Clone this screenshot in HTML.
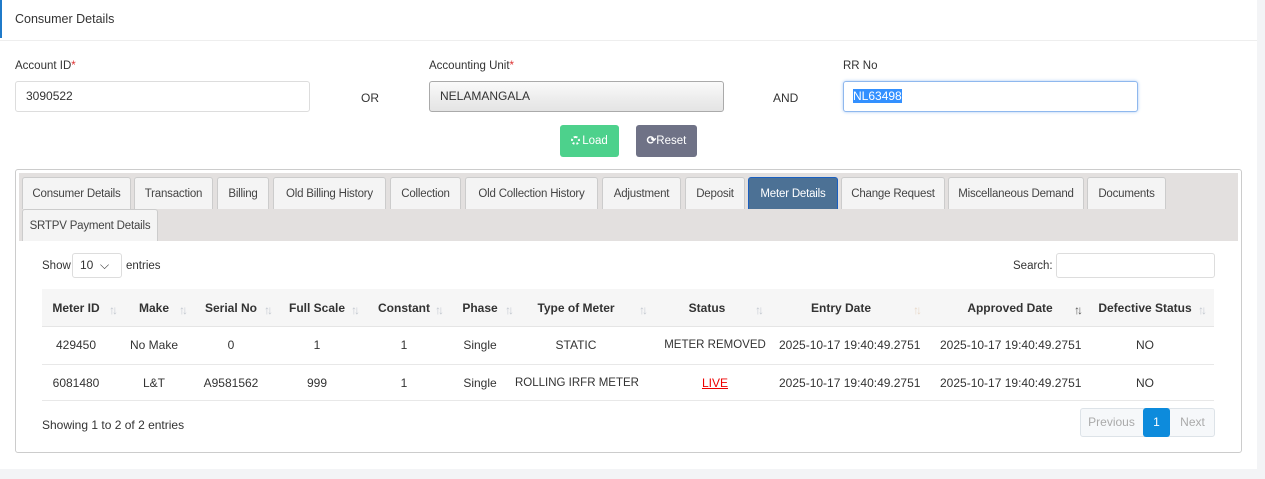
<!DOCTYPE html>
<html><head><style>
*{box-sizing:border-box;margin:0;padding:0}
body{width:1265px;height:479px;background:#f3f4f6;font-family:"Liberation Sans",sans-serif;font-size:12px;color:#333;position:relative;overflow:hidden}
.a{position:absolute}
.card{left:0;top:0;width:1257px;height:469px;background:#fff}
.inp{border:1px solid #ddd;border-radius:3px;background:#fff;height:31px;padding:0 10px;line-height:29px}
.tab{position:absolute;height:32px;background:#f4f4f4;border:1px solid #ccc;border-bottom:none;border-radius:3px 3px 0 0;text-align:center;line-height:32px;color:#444;font-size:11.5px;letter-spacing:-0.2px;white-space:nowrap}
.col{position:absolute;text-align:center;white-space:nowrap}
.ic{position:absolute;color:#c3c8d0;font-size:12px;letter-spacing:-3px}
</style></head><body>
<div class="a card"></div>
<div class="a" style="left:0;top:0;width:2px;height:38px;background:#1f7ac9"></div>
<div class="a" style="left:15px;top:12px;font-size:12.5px;color:#333">Consumer Details</div>
<div class="a" style="left:0;top:40px;width:1257px;height:1px;background:#eee"></div>

<div class="a" style="left:15px;top:60px;font-size:11.5px">Account ID<span style="color:#d33">*</span></div>
<div class="a inp" style="left:15px;top:81px;width:295px">3090522</div>
<div class="a" style="left:361px;top:91px">OR</div>
<div class="a" style="left:429px;top:60px;font-size:11.5px">Accounting Unit<span style="color:#d33">*</span></div>
<div class="a inp" style="left:429px;top:81px;width:295px;border-color:#aaa;background:linear-gradient(#fafafa,#ececec 60%,#e4e4e4);line-height:28px">NELAMANGALA</div>
<div class="a" style="left:773px;top:91px">AND</div>
<div class="a" style="left:843px;top:60px;font-size:11.5px">RR No</div>
<div class="a inp" style="left:843px;top:81px;width:295px;border:1px solid #8fb8ee;box-shadow:0 0 3px #a9c9f3;padding:0 9px"><span style="background:#3390ff;color:#fff">NL63498</span></div>

<div class="a" style="left:560px;top:125px;width:59px;height:32px;background:#4dd18c;border-radius:3px;color:#fff;line-height:32px;text-align:center;font-size:11.5px"><span style="display:inline-block;width:9px;height:9px;border:2px dotted #fff;border-radius:50%;vertical-align:-1px;margin-right:2px"></span>Load</div>
<div class="a" style="left:636px;top:125px;width:61px;height:32px;background:#6f7286;border-radius:3px;color:#fff;line-height:32px;text-align:center;font-size:11.5px"><b>⟳</b>Reset</div>

<div class="a" style="left:15px;top:169px;width:1227px;height:284px;border:1px solid #ccc;border-radius:3px;background:#fff"></div>
<div class="a" style="left:19px;top:173px;width:1219px;height:68px;background:#e3e0df"></div>
<div class="tab" style="left:22px;top:177px;width:109px">Consumer Details</div>
<div class="tab" style="left:134px;top:177px;width:79px">Transaction</div>
<div class="tab" style="left:217px;top:177px;width:52px">Billing</div>
<div class="tab" style="left:273px;top:177px;width:113px">Old Billing History</div>
<div class="tab" style="left:390px;top:177px;width:71px">Collection</div>
<div class="tab" style="left:465px;top:177px;width:133px">Old Collection History</div>
<div class="tab" style="left:602px;top:177px;width:79px">Adjustment</div>
<div class="tab" style="left:685px;top:177px;width:60px">Deposit</div>
<div class="tab" style="left:748px;top:177px;width:90px;background:#4c7195;border-color:#1a5fc0;color:#fff">Meter Details</div>
<div class="tab" style="left:841px;top:177px;width:104px">Change Request</div>
<div class="tab" style="left:948px;top:177px;width:136px">Miscellaneous Demand</div>
<div class="tab" style="left:1087px;top:177px;width:79px">Documents</div>
<div class="tab" style="left:22px;top:209px;width:136px">SRTPV Payment Details</div>

<div class="a" style="left:42px;top:260px;font-size:11.5px">Show</div>
<div class="a" style="left:72px;top:253px;width:50px;height:25px;border:1px solid #ddd;border-radius:3px;line-height:23px;padding-left:7px">10 &nbsp;⌵</div>
<div class="a" style="left:126px;top:260px;font-size:11.5px">entries</div>
<div class="a" style="left:1013px;top:260px;font-size:11.5px">Search:</div>
<div class="a" style="left:1056px;top:253px;width:159px;height:25px;border:1px solid #ddd;border-radius:3px"></div>

<div class="a" style="left:42px;top:289px;width:1172px;height:38px;background:#f6f6f6;border-bottom:1px solid #e5e5e5"></div>
<div class="a" style="left:42px;top:364px;width:1172px;height:1px;background:#e8e8e8"></div>
<div class="a" style="left:42px;top:400px;width:1172px;height:1px;background:#e8e8e8"></div>

<div style="font-weight:bold">
<div class="col" style="left:42px;top:301px;width:68px">Meter ID</div>
<div class="col" style="left:125px;top:301px;width:58px">Make</div>
<div class="col" style="left:195px;top:301px;width:72px">Serial No</div>
<div class="col" style="left:280px;top:301px;width:74px">Full Scale</div>
<div class="col" style="left:367px;top:301px;width:74px">Constant</div>
<div class="col" style="left:451px;top:301px;width:58px">Phase</div>
<div class="col" style="left:521px;top:301px;width:110px">Type of Meter</div>
<div class="col" style="left:655px;top:301px;width:104px">Status</div>
<div class="col" style="left:771px;top:301px;width:140px">Entry Date</div>
<div class="col" style="left:929px;top:301px;width:162px">Approved Date</div>
<div class="col" style="left:1090px;top:301px;width:110px">Defective Status</div>
</div>
<div class="ic" style="left:109px;top:303px">↑↓</div>
<div class="ic" style="left:179px;top:303px">↑↓</div>
<div class="ic" style="left:264px;top:303px">↑↓</div>
<div class="ic" style="left:351px;top:303px">↑↓</div>
<div class="ic" style="left:435px;top:303px">↑↓</div>
<div class="ic" style="left:505px;top:303px">↑↓</div>
<div class="ic" style="left:639px;top:303px">↑↓</div>
<div class="ic" style="left:755px;top:303px">↑↓</div>
<div class="ic" style="left:913px;top:303px;color:#e8d8c8">↑↓</div>
<div class="ic" style="left:1074px;top:303px;color:#555">↑↓</div>
<div class="ic" style="left:1198px;top:303px">↑↓</div>

<div class="col" style="left:42px;top:338px;width:68px">429450</div>
<div class="col" style="left:125px;top:338px;width:58px">No Make</div>
<div class="col" style="left:195px;top:338px;width:72px">0</div>
<div class="col" style="left:280px;top:338px;width:74px">1</div>
<div class="col" style="left:367px;top:338px;width:74px">1</div>
<div class="col" style="left:451px;top:338px;width:58px">Single</div>
<div class="col" style="left:521px;top:338px;width:110px">STATIC</div>
<div class="col" style="left:655px;top:339px;width:120px;font-size:11.5px">METER REMOVED</div>
<div class="col" style="left:779px;top:338px;width:140px">2025-10-17 19:40:49.2751</div>
<div class="col" style="left:940px;top:338px;width:140px">2025-10-17 19:40:49.2751</div>
<div class="col" style="left:1090px;top:338px;width:110px">NO</div>

<div class="col" style="left:42px;top:376px;width:68px">6081480</div>
<div class="col" style="left:125px;top:376px;width:58px">L&amp;T</div>
<div class="col" style="left:195px;top:376px;width:72px">A9581562</div>
<div class="col" style="left:280px;top:376px;width:74px">999</div>
<div class="col" style="left:367px;top:376px;width:74px">1</div>
<div class="col" style="left:451px;top:376px;width:58px">Single</div>
<div class="col" style="left:515px;top:377px;width:120px;font-size:11.5px">ROLLING IRFR METER</div>
<div class="col" style="left:655px;top:376px;width:120px;color:#e00;text-decoration:underline">LIVE</div>
<div class="col" style="left:779px;top:376px;width:140px">2025-10-17 19:40:49.2751</div>
<div class="col" style="left:940px;top:376px;width:140px">2025-10-17 19:40:49.2751</div>
<div class="col" style="left:1090px;top:376px;width:110px">NO</div>

<div class="a" style="left:42px;top:418px">Showing 1 to 2 of 2 entries</div>
<div class="a" style="left:1080px;top:408px;width:135px;height:29px;border:1px solid #dde3e8;border-radius:3px;background:#f6f8fa"></div>
<div class="a" style="left:1080px;top:408px;width:63px;height:29px;line-height:29px;text-align:center;color:#aaa">Previous</div>
<div class="a" style="left:1143px;top:408px;width:27px;height:29px;line-height:29px;text-align:center;color:#fff;background:#0d8bdc;border-radius:3px">1</div>
<div class="a" style="left:1170px;top:408px;width:45px;height:29px;line-height:29px;text-align:center;color:#aaa">Next</div>
</body></html>
